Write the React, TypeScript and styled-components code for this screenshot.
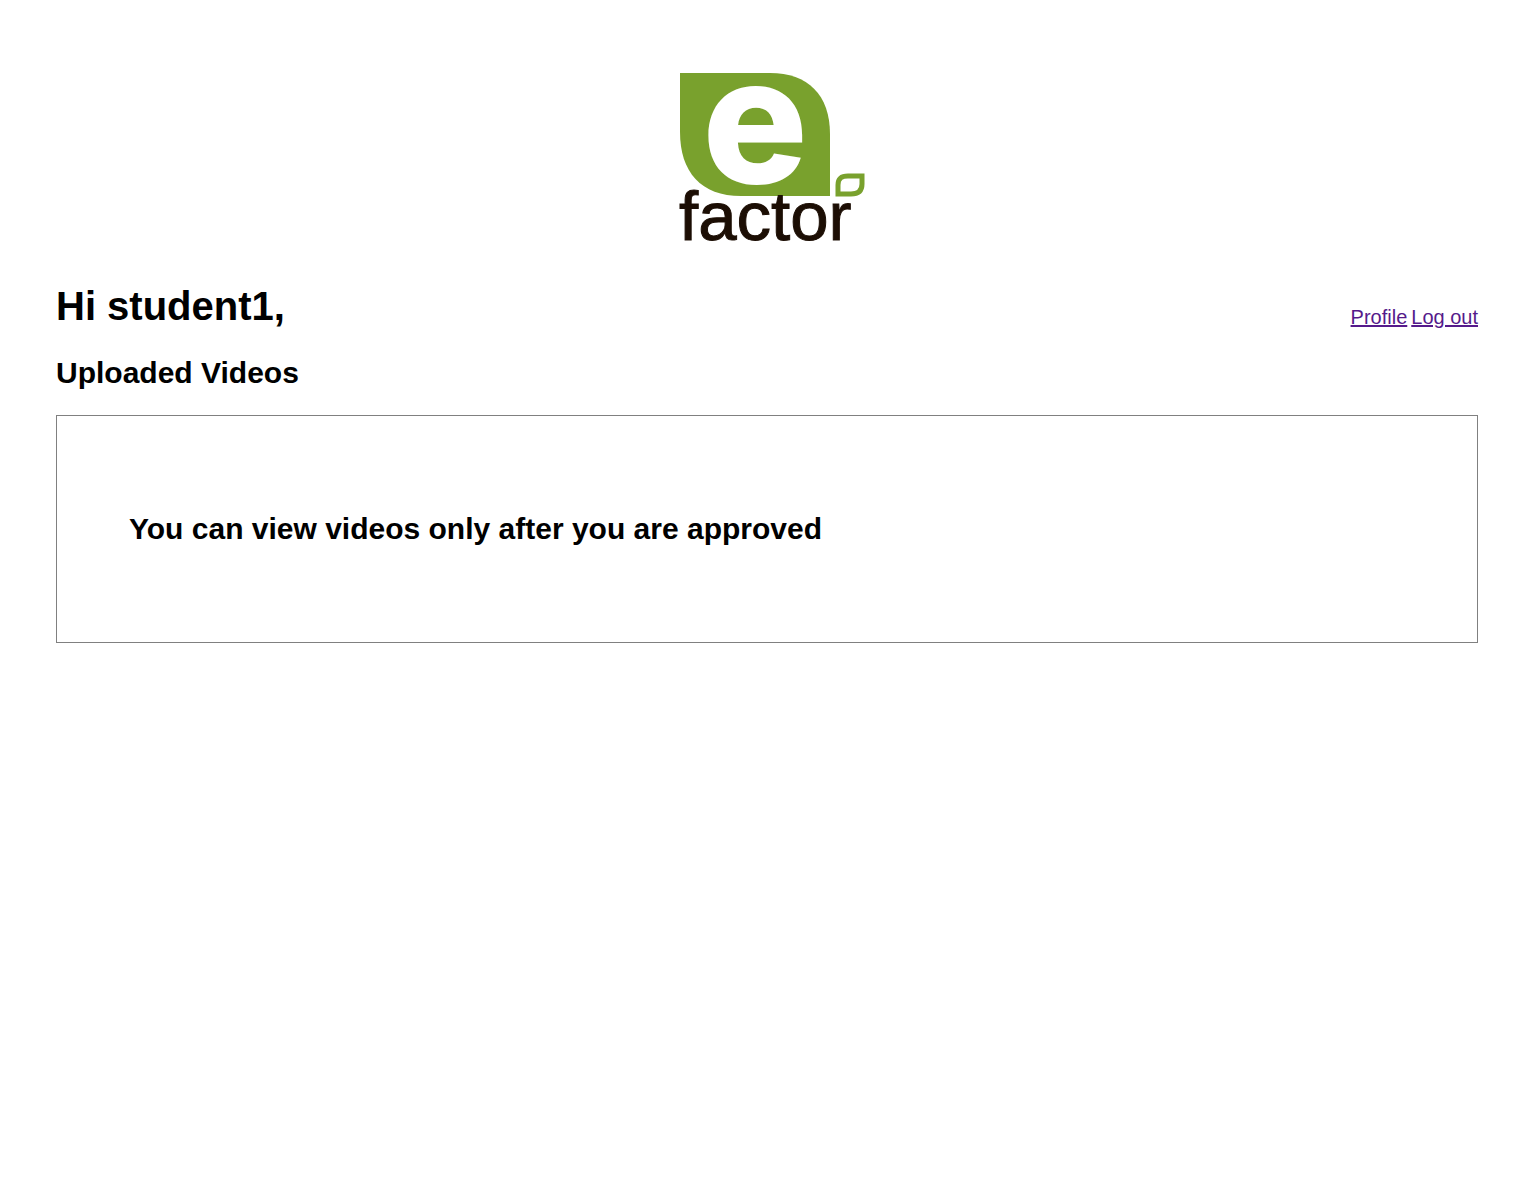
import React from "react";
import styled, { createGlobalStyle } from "styled-components";

const GlobalStyle = createGlobalStyle`
  body {
    margin: 0;
    background: #fff;
    color: #000;
    font-family: "Liberation Sans", Arial, Helvetica, sans-serif;
  }
`;

const Page = styled.main`
  padding: 56px;
`;

const Brand = styled.div`
  display: flex;
  justify-content: center;
  margin-bottom: 27px;
`;

const LogoImage = styled.svg`
  width: 200px;
  height: 200px;
  overflow: visible;
`;

const Initial = styled.text`
  font-family: Inter, "Liberation Sans", sans-serif;
  font-size: 176px;
  font-weight: 800;
  text-anchor: middle;
  fill: #fff;
`;

const Wordmark = styled.text`
  font-family: "Liberation Sans", Arial, sans-serif;
  font-size: 69px;
  fill: #1c0e04;
  stroke: #1c0e04;
  stroke-width: 1px;
`;

const Header = styled.header`
  display: flex;
  flex-wrap: wrap;
  align-items: flex-end;
  justify-content: space-between;
  margin-bottom: 27px;
`;

const Greeting = styled.h1`
  margin: 0;
  font-size: 40px;
  line-height: 46px;
`;

const Nav = styled.nav`
  display: flex;
  gap: 4px;
`;

const NavLink = styled.a`
  color: #551a8b;
  font-size: 20px;
  line-height: 24px;
  text-decoration: underline;
`;

const Title = styled.h2`
  margin: 0;
  font-size: 30px;
  line-height: 34px;
`;

const Panel = styled.section`
  margin-top: 25px;
  padding: 96px 72px;
  border: 1px solid #808080;
`;

function Logo() {
  return (
    <LogoImage viewBox="0 0 200 200" role="img" aria-label="e factor">
      <path
        d="M13 17H103C141 17 163 39 163 78V140H74C34 140 13 116 13 76Z"
        fill="#79a12d"
      />
      <Initial x="88" y="127">
        e
      </Initial>
      <path
        d="M171 138V129C171 122 175 120 181 120H195V128C195 135 191 138 184 138Z"
        fill="none"
        stroke="#79a12d"
        strokeWidth="5"
      />
      <Wordmark x="12" y="184">
        factor
      </Wordmark>
    </LogoImage>
  );
}

export default function App() {
  return (
    <>
      <GlobalStyle />
      <Page>
        <Brand>
          <Logo />
        </Brand>
        <Header>
          <Greeting>Hi student1,</Greeting>
          <Nav aria-label="Account">
            <NavLink href="#profile">Profile</NavLink>
            <NavLink href="#logout">Log out</NavLink>
          </Nav>
        </Header>
        <Title>Uploaded Videos</Title>
        <Panel>
          <Title>You can view videos only after you are approved</Title>
        </Panel>
      </Page>
    </>
  );
}
